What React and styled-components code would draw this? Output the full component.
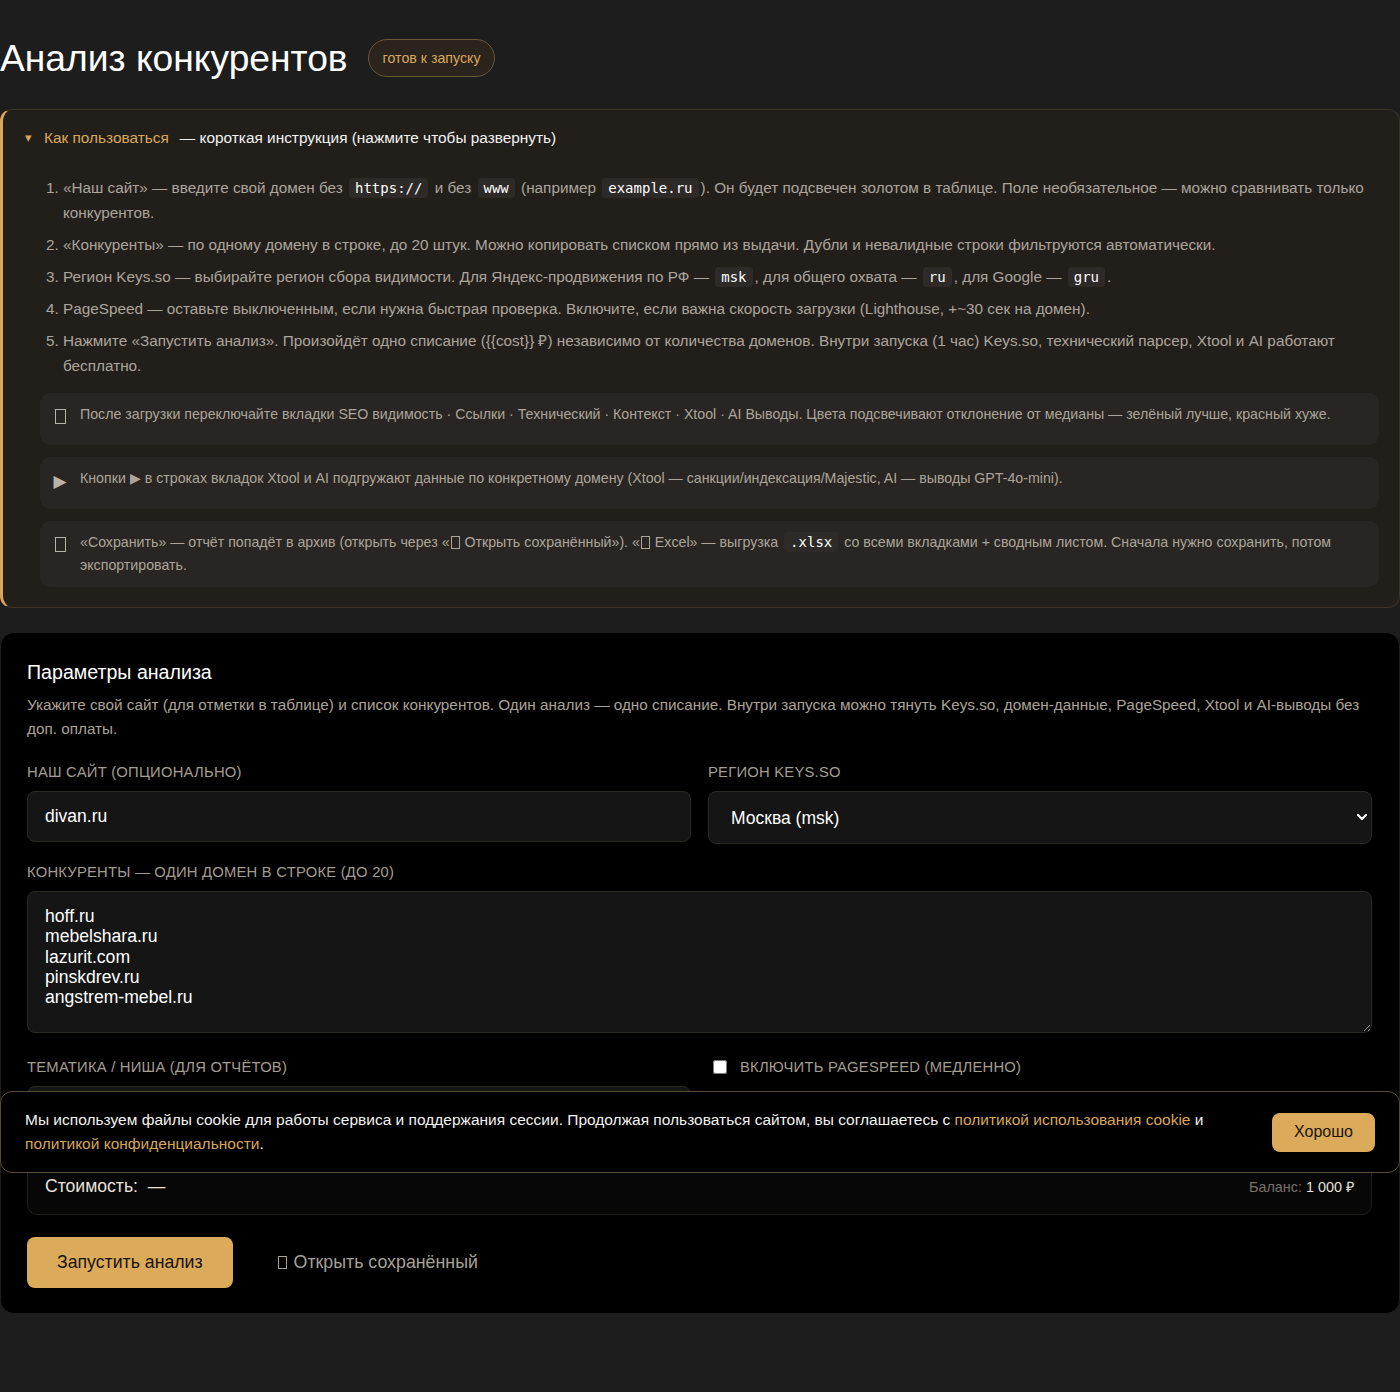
import styled, { createGlobalStyle } from "styled-components";

const GlobalStyle = createGlobalStyle`
    html, body {
        margin: 0;
        padding: 0;
        background: #1d1d1d;
        color: #f2f2f2;
        font-family: "Liberation Sans", Arial, sans-serif;
    }
    * {
        box-sizing: border-box;
    }
`;

const Styles = {
    Page: styled.div`
        padding: 34px 0 78px;
        min-height: 1392px;
    `,
    Header: styled.div`
        display: flex;
        align-items: center;
        gap: 20px;
        margin-bottom: 27px;
    `,
    Title: styled.h1`
        margin: 0;
        font-size: 37.2px;
        font-weight: 400;
        line-height: 48px;
        color: #ffffff;
    `,
    Badge: styled.span`
        display: inline-flex;
        align-items: center;
        height: 38px;
        padding: 0 14px;
        border: 1px solid #6b5536;
        border-radius: 19px;
        background: #2a241c;
        color: #d9a75b;
        font-size: 14.2px;
    `,
    Guide: styled.div`
        border: 1px solid #3d3426;
        border-left: 3px solid #d9a75b;
        border-radius: 12px;
        background: #221f1b;
        padding: 18px 20px 20px 21px;
    `,
    Summary: styled.div`
        display: flex;
        align-items: center;
        font-size: 15.4px;
        line-height: 20px;
        color: #f2f2f2;
    `,
    Caret: styled.span`
        font-size: 13px;
        color: #d9a75b;
        width: 20px;
        padding-left: 1px;
    `,
    GoldText: styled.span`
        color: #d9a75b;
        margin-right: 11px;
    `,
    GuideBody: styled.div`
        padding-left: 16px;
        margin-top: 27px;
    `,
    Steps: styled.ol`
        margin: 0 0 15px;
        padding-left: 23px;
        color: #aca59b;
        font-size: 15.3px;
        line-height: 25px;
    `,
    Step: styled.li`
        margin-bottom: 7px;
        &::marker {
            color: #aca59b;
        }
    `,
    Code: styled.code`
        display: inline-block;
        font-family: "DejaVu Sans Mono", "Liberation Mono", monospace;
        font-size: 14px;
        line-height: 20px;
        padding: 0 6px;
        margin: 0 2px;
        border-radius: 4px;
        background: #2d2a27;
        color: #ffffff;
    `,
    Tips: styled.div`
        display: flex;
        flex-direction: column;
        gap: 12px;
    `,
    Tip: styled.div`
        display: flex;
        align-items: flex-start;
        gap: 13px;
        min-height: 52px;
        padding: 10px 13px;
        border-radius: 10px;
        background: #282522;
        color: #aca59b;
        font-size: 14.2px;
        line-height: 23px;
    `,
    TipIcon: styled.span`
        flex: none;
        display: flex;
        justify-content: center;
        width: 14px;
        padding-top: ${p => (p.$play ? "0" : "6px")};
        font-family: "DejaVu Sans", sans-serif;
        font-size: 17px;
        line-height: 28px;
        color: #b9b2a7;
    `,
    Tofu: styled.span`
        display: inline-block;
        width: ${p => (p.$big ? "11px" : "9px")};
        height: ${p => (p.$big ? "15px" : "13px")};
        border: 1px solid currentColor;
        vertical-align: ${p => (p.$big ? "top" : "-2px")};
        margin: 0 1px;
    `,
    Card: styled.div`
        margin-top: 24px;
        background: #000000;
        border: 1px solid #1d1d1d;
        border-radius: 14px;
        padding: 26px 27px 25px 26px;
    `,
    CardTitle: styled.h2`
        margin: 0 0 8px;
        font-size: 19.6px;
        font-weight: 400;
        line-height: 26px;
        color: #ffffff;
    `,
    Lead: styled.p`
        margin: 0 0 22px;
        font-size: 15.3px;
        line-height: 24px;
        color: #aaa39a;
    `,
    Grid: styled.div`
        display: grid;
        grid-template-columns: 1fr 1fr;
        column-gap: 17px;
        row-gap: 19px;
        margin-bottom: 20px;
    `,
    Field: styled.div`
        display: flex;
        flex-direction: column;
        gap: 10px;
        grid-column: ${p => (p.$wide ? "1 / -1" : "auto")};
    `,
    Label: styled.label`
        font-size: 14.8px;
        line-height: 18px;
        letter-spacing: 0.22px;
        text-transform: uppercase;
        color: #a39d93;
    `,
    Input: styled.input`
        height: 51px;
        padding: 0 17px;
        border: 1px solid #2c2923;
        border-radius: 8px;
        background: #151515;
        color: #ffffff;
        font-family: "Liberation Sans", Arial, sans-serif;
        font-size: 17.5px;
        outline: none;
    `,
    SelectWrap: styled.div`
        position: relative;
    `,
    Select: styled.select`
        width: 100%;
        height: 53px;
        padding: 0 22px;
        border: 1px solid #2c2923;
        border-radius: 8px;
        background: #151515;
        color: #ffffff;
        font-family: "Liberation Sans", Arial, sans-serif;
        font-size: 17.5px;
        appearance: none;
        outline: none;
    `,
    Chevron: styled.svg`
        position: absolute;
        right: 4px;
        top: 21px;
        pointer-events: none;
    `,
    TextArea: styled.textarea`
        display: block;
        height: 142px;
        padding: 14px 17px;
        border: 1px solid #2c2923;
        border-radius: 8px;
        background: #151515;
        color: #ffffff;
        font-family: "Liberation Sans", Arial, sans-serif;
        font-size: 17.6px;
        line-height: 20.3px;
        resize: vertical;
        outline: none;
        margin-bottom: 6px;
    `,
    CheckRow: styled.label`
        display: flex;
        align-items: center;
        gap: 13px;
        padding-left: 5px;
        font-size: 14.8px;
        line-height: 18px;
        letter-spacing: 0.22px;
        text-transform: uppercase;
        color: #a39d93;
    `,
    Check: styled.input`
        margin: 0;
        width: 14px;
        height: 14px;
    `,
    CostBox: styled.div`
        display: flex;
        align-items: center;
        justify-content: space-between;
        height: 58px;
        padding: 0 17px;
        border: 1px solid #221f1b;
        border-radius: 10px;
        background: #070707;
        margin-bottom: 22px;
    `,
    Cost: styled.div`
        font-size: 17.6px;
        color: #e6e2dc;
    `,
    Balance: styled.div`
        font-size: 14.4px;
        color: #77716a;
        b {
            font-weight: 400;
            color: #e6e2dc;
        }
    `,
    Actions: styled.div`
        display: flex;
        align-items: center;
        gap: 44px;
    `,
    PrimaryButton: styled.button`
        height: 51px;
        padding: 0 30px;
        border: none;
        border-radius: 8px;
        background: #dcaa5b;
        color: #1a140c;
        font-family: "Liberation Sans", Arial, sans-serif;
        font-size: 17.7px;
    `,
    GhostButton: styled.button`
        display: flex;
        align-items: center;
        gap: 6px;
        border: none;
        background: none;
        padding: 0;
        color: #a6a099;
        font-family: "Liberation Sans", Arial, sans-serif;
        font-size: 17.8px;
    `,
    Cookie: styled.div`
        position: fixed;
        left: 0;
        right: 0;
        top: 1091px;
        display: flex;
        align-items: center;
        gap: 24px;
        padding: 16px 24px 16px 24px;
        border: 1px solid #5a4a33;
        border-radius: 12px;
        background: #000000;
    `,
    CookieText: styled.p`
        flex: 1;
        margin: 0;
        font-size: 15.5px;
        line-height: 24px;
        color: #f2f2f2;
        a {
            color: #d9a75b;
            text-decoration: none;
        }
    `,
    CookieButton: styled.button`
        flex: none;
        height: 39px;
        padding: 0 22px;
        border: none;
        border-radius: 8px;
        background: #dcaa5b;
        color: #1a140c;
        font-family: "Liberation Sans", Arial, sans-serif;
        font-size: 16px;
    `,
};

const competitors = ["hoff.ru", "mebelshara.ru", "lazurit.com", "pinskdrev.ru", "angstrem-mebel.ru"].join("\n");

function App() {
    const S = Styles;

    return (
        <>
            <GlobalStyle/>
            <S.Page>
                <S.Header>
                    <S.Title>Анализ конкурентов</S.Title>
                    <S.Badge>готов к запуску</S.Badge>
                </S.Header>

                <S.Guide>
                    <S.Summary>
                        <S.Caret>▾</S.Caret>
                        <S.GoldText>Как пользоваться</S.GoldText>
                        — короткая инструкция (нажмите чтобы развернуть)
                    </S.Summary>
                    <S.GuideBody>
                        <S.Steps>
                            <S.Step>
                                «Наш сайт» — введите свой домен без <S.Code>https://</S.Code> и без <S.Code>www</S.Code> (например <S.Code>example.ru</S.Code>). Он будет подсвечен золотом в таблице. Поле необязательное — можно сравнивать только конкурентов.
                            </S.Step>
                            <S.Step>
                                «Конкуренты» — по одному домену в строке, до 20 штук. Можно копировать списком прямо из выдачи. Дубли и невалидные строки фильтруются автоматически.
                            </S.Step>
                            <S.Step>
                                Регион Keys.so — выбирайте регион сбора видимости. Для Яндекс-продвижения по РФ — <S.Code>msk</S.Code>, для общего охвата — <S.Code>ru</S.Code>, для Google — <S.Code>gru</S.Code>.
                            </S.Step>
                            <S.Step>
                                PageSpeed — оставьте выключенным, если нужна быстрая проверка. Включите, если важна скорость загрузки (Lighthouse, +~30 сек на домен).
                            </S.Step>
                            <S.Step>
                                Нажмите «Запустить анализ». Произойдёт одно списание ({"{{cost}}"} ₽) независимо от количества доменов. Внутри запуска (1 час) Keys.so, технический парсер, Xtool и AI работают бесплатно.
                            </S.Step>
                        </S.Steps>

                        <S.Tips>
                            <S.Tip>
                                <S.TipIcon><S.Tofu $big/></S.TipIcon>
                                <span>После загрузки переключайте вкладки SEO видимость · Ссылки · Технический · Контекст · Xtool · AI Выводы. Цвета подсвечивают отклонение от медианы — зелёный лучше, красный хуже.</span>
                            </S.Tip>
                            <S.Tip>
                                <S.TipIcon $play>▶</S.TipIcon>
                                <span>Кнопки ▶ в строках вкладок Xtool и AI подгружают данные по конкретному домену (Xtool — санкции/индексация/Majestic, AI — выводы GPT-4o-mini).</span>
                            </S.Tip>
                            <S.Tip>
                                <S.TipIcon><S.Tofu $big/></S.TipIcon>
                                <span>«Сохранить» — отчёт попадёт в архив (открыть через «<S.Tofu/> Открыть сохранённый»). «<S.Tofu/> Excel» — выгрузка <S.Code>.xlsx</S.Code> со всеми вкладками + сводным листом. Сначала нужно сохранить, потом экспортировать.</span>
                            </S.Tip>
                        </S.Tips>
                    </S.GuideBody>
                </S.Guide>

                <S.Card>
                    <S.CardTitle>Параметры анализа</S.CardTitle>
                    <S.Lead>
                        Укажите свой сайт (для отметки в таблице) и список конкурентов. Один анализ — одно списание. Внутри запуска можно тянуть Keys.so, домен-данные, PageSpeed, Xtool и AI-выводы без доп. оплаты.
                    </S.Lead>

                    <S.Grid>
                        <S.Field>
                            <S.Label>Наш сайт (опционально)</S.Label>
                            <S.Input defaultValue="divan.ru"/>
                        </S.Field>
                        <S.Field>
                            <S.Label>Регион Keys.so</S.Label>
                            <S.SelectWrap>
                                <S.Select defaultValue="msk">
                                    <option value="msk">Москва (msk)</option>
                                    <option value="ru">Россия (ru)</option>
                                    <option value="gru">Google (gru)</option>
                                </S.Select>
                                <S.Chevron width="12" height="10" viewBox="0 0 12 10">
                                    <path d="M2 3l4 4 4-4" fill="none" stroke="#ffffff" strokeWidth="2.2" strokeLinecap="round" strokeLinejoin="round"/>
                                </S.Chevron>
                            </S.SelectWrap>
                        </S.Field>
                        <S.Field $wide>
                            <S.Label>Конкуренты — один домен в строке (до 20)</S.Label>
                            <S.TextArea defaultValue={competitors}/>
                        </S.Field>
                        <S.Field>
                            <S.Label>Тематика / ниша (для отчётов)</S.Label>
                            <S.Input defaultValue=""/>
                        </S.Field>
                        <S.Field>
                            <S.CheckRow>
                                <S.Check type="checkbox"/>
                                Включить PageSpeed (медленно)
                            </S.CheckRow>
                        </S.Field>
                    </S.Grid>

                    <S.CostBox>
                        <S.Cost>Стоимость: &nbsp;—</S.Cost>
                        <S.Balance>Баланс: <b>1 000 ₽</b></S.Balance>
                    </S.CostBox>

                    <S.Actions>
                        <S.PrimaryButton>Запустить анализ</S.PrimaryButton>
                        <S.GhostButton><S.Tofu/> Открыть сохранённый</S.GhostButton>
                    </S.Actions>
                </S.Card>
            </S.Page>

            <S.Cookie>
                <S.CookieText>
                    Мы используем файлы cookie для работы сервиса и поддержания сессии. Продолжая пользоваться сайтом, вы соглашаетесь с <a href="#cookie">политикой использования cookie</a> и <a href="#privacy">политикой конфиденциальности</a>.
                </S.CookieText>
                <S.CookieButton>Хорошо</S.CookieButton>
            </S.Cookie>
        </>
    );
}

export default App;
